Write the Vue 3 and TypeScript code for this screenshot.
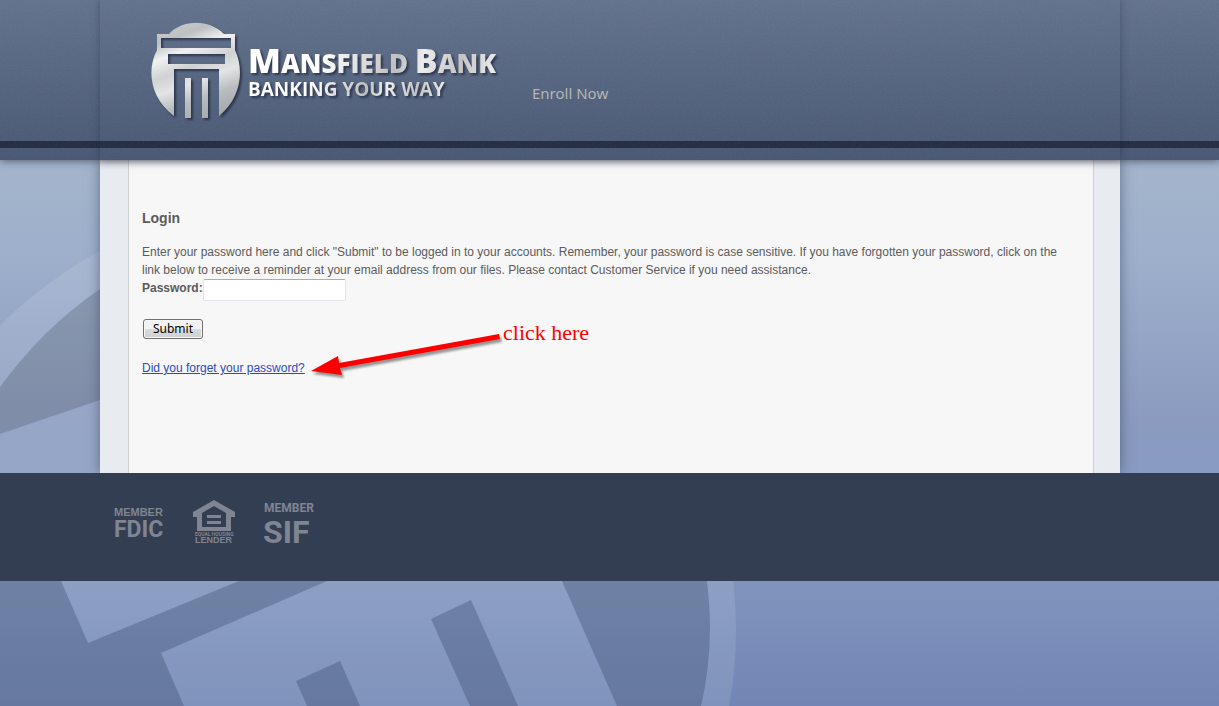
<script setup lang="ts">
import { ref } from 'vue'

const password = ref('')
</script>

<template>
  <div class="page">
    <svg class="backdrop" width="1219" height="706" viewBox="0 0 1219 706" aria-hidden="true">
      <circle cx="305" cy="630" r="431" fill="#ffffff" fill-opacity=".11" />
      <path d="M0 387Q43 328 100 289L400 160V320L100 400L0 434Z" fill="#3f495a" fill-opacity=".27" />
      <g fill="#2a3a5f" fill-opacity=".3">
        <path fill-rule="evenodd" d="M0 520H695Q710 580 710 627Q710 667 701 706H617L562 581L540 530H405L327 581L161 653L184 706H0ZM39 530L61 581L88 643L239 581L360 530Z" />
        <path d="M431 619L471 600L518 706H470Z" />
        <path d="M296 681L340 661L360 706H307Z" />
      </g>
    </svg>

    <header class="header">
      <svg class="grain" width="100%" height="100%" aria-hidden="true">
        <filter id="grain">
          <feTurbulence type="fractalNoise" baseFrequency=".6" numOctaves="2" />
          <feColorMatrix type="saturate" values="0" />
        </filter>
        <rect width="100%" height="100%" filter="url(#grain)" />
      </svg>
      <div class="masthead">
        <a class="brand" href="#" aria-label="Mansfield Bank, Banking Your Way">
          <svg class="emblem" width="90" height="100" viewBox="0 0 90 100" aria-hidden="true">
            <defs>
              <linearGradient id="steel" gradientUnits="userSpaceOnUse" x1="25" y1="0" x2="60" y2="96">
                <stop offset="0" stop-color="#c6c8ca" />
                <stop offset=".13" stop-color="#bdc0c2" />
                <stop offset=".28" stop-color="#f0f1f2" />
                <stop offset=".45" stop-color="#cfd1d3" />
                <stop offset=".6" stop-color="#e2e4e5" />
                <stop offset=".78" stop-color="#b9bcbf" />
                <stop offset="1" stop-color="#a4a8ac" />
              </linearGradient>
            </defs>
            <g fill="url(#steel)">
              <path fill-rule="evenodd" d="M5 11H17C31 -4 57 -4 72 11H83V27C92 46 90 74 67 93V46H22V93C-3 74 -5 46 5 27ZM9 15V25H79V15ZM16 31V41H73V31Z" />
              <path d="M33 55H39V95H33ZM50 55H56V95H50Z" />
            </g>
          </svg>
          <span class="wordmark">
            <span class="name"><span class="cap">M</span>ANSFIELD <span class="cap">B</span>ANK</span>
            <span class="tagline">BANKING YOUR WAY</span>
          </span>
        </a>
        <nav class="nav"><a href="#">Enroll Now</a></nav>
      </div>
    </header>

    <main class="shell">
      <section class="panel">
        <h1>Login</h1>
        <p>
          Enter your password here and click "Submit" to be logged in to your accounts. Remember, your password is case sensitive. If you have forgotten your password, click on the link below to receive a reminder at your email address from our files. Please contact Customer Service if you need assistance.
        </p>
        <form @submit.prevent>
          <div class="field">
            <label for="password">Password:</label>
            <input id="password" v-model="password" type="password" />
          </div>
          <button type="submit">Submit</button>
        </form>
        <div class="reminder">
          <a href="#">Did you forget your password?</a>
          <div class="callout">
            <svg width="196" height="52" viewBox="0 0 196 52" aria-hidden="true">
              <path d="M0 41L27 26L28 33L188 4L189 9L29 38L31 45Z" fill="#fe0000" />
            </svg>
            <span>click here</span>
          </div>
        </div>
      </section>
    </main>

    <footer class="footer">
      <svg width="50" height="30" viewBox="0 0 50 30" role="img" aria-label="Member FDIC">
        <text class="fdic-top" x="0" y="9">MEMBER</text>
        <text class="fdic" x="0" y="30">FDIC</text>
      </svg>
      <svg width="42" height="44" viewBox="0 0 42 44" role="img" aria-label="Equal Housing Lender">
        <path fill-rule="evenodd" d="M21 0L42 12V17H38V31H4V17H0V12ZM21 6L9 13V27H33V13Z" />
        <path d="M14 15H28V18H14ZM14 21H28V24H14Z" />
        <text class="equal" x="2" y="36">EQUAL HOUSING</text>
        <text class="lender" x="2" y="43">LENDER</text>
      </svg>
      <svg width="50" height="42" viewBox="0 0 50 42" role="img" aria-label="Member SIF">
        <text class="sif-top" x="0" y="11">MEMBER</text>
        <text class="sif" x="-1" y="42">SIF</text>
      </svg>
    </footer>
  </div>
</template>

<style>
html,
body {
  margin: 0;
  background: #7388b4;
}
</style>

<style scoped>
.page {
  position: relative;
  min-height: 100vh;
  overflow: hidden;
  font-family: "Liberation Sans", Arial, sans-serif;
  font-size: 12px;
  line-height: 18px;
  color: #5b5b5b;
  background: linear-gradient(#a4b5cb 160px, #9dafcb 260px, #8b9bc0 420px, #889bc0 475px, #8094bd 581px, #7186b4 706px);
}
.backdrop {
  position: absolute;
  top: 0;
  left: 0;
}
.header {
  position: relative;
  z-index: 1;
  height: 160px;
  background: linear-gradient(transparent 141px, #232b40 141px, #232b40 148px, transparent 148px), linear-gradient(#62718c, #475672);
  box-shadow: 0 1px 8px rgba(40, 45, 55, .65);
}
.grain {
  position: absolute;
  inset: 0;
  opacity: .07;
}
.masthead {
  position: relative;
  display: flex;
  box-sizing: border-box;
  height: 100%;
  margin: 0 99px 0 100px;
  padding: 23px 0 0 52px;
  box-shadow: 0 0 8px rgba(30, 38, 60, .4);
}
.brand {
  display: flex;
  align-items: flex-start;
  gap: 6px;
  width: 380px;
  color: #eee;
  text-decoration: none;
}
.emblem {
  flex: none;
  overflow: visible;
  filter: drop-shadow(2px 2px 1px rgba(25, 35, 55, .7));
}
.wordmark {
  display: flex;
  flex-direction: column;
  padding-top: 21px;
  white-space: nowrap;
  font-family: "Open Sans", "Noto Sans", sans-serif;
  font-weight: 800;
  filter: drop-shadow(2px 2px 1px rgba(25, 35, 55, .7));
}
.name,
.tagline {
  width: max-content;
  color: transparent;
  background: linear-gradient(100deg, #fff 30%, #bfbfbf 60%, #ededed 70%, #c4c4c4 85%, #eee);
  background-clip: text;
}
.name {
  font-size: 26px;
  line-height: 32px;
}
.cap {
  font-size: 34px;
}
.tagline {
  font-size: 19px;
  line-height: 20px;
  font-weight: 700;
}
.nav {
  padding-top: 58px;
}
.nav a {
  font-family: "Noto Sans", sans-serif;
  font-size: 15px;
  line-height: 24px;
  color: #b5b5b5;
  text-decoration: none;
}
.shell {
  position: relative;
  margin: 0 99px 0 100px;
  padding: 0 26px 0 28px;
  background: #e8ebf0;
  box-shadow: 0 0 12px rgba(50, 65, 95, .6);
}
.panel {
  box-sizing: border-box;
  min-height: 313px;
  padding: 49px 13px 0;
  border: solid #cfd0d2;
  border-width: 0 1px;
  background: #f7f7f7;
}
h1 {
  margin: 0 0 16px;
  font-size: 14px;
  line-height: 18px;
}
p {
  margin: 0;
  padding-right: 8px;
}
.field {
  display: flex;
  height: 22px;
  margin-bottom: 18px;
}
label {
  font-weight: 700;
}
input {
  box-sizing: border-box;
  width: 143px;
  height: 22px;
  padding: 2px;
  border: 1px solid #e2e3ea;
  border-top-color: #abadb3;
  border-radius: 2px;
  background: #fff;
}
button {
  display: block;
  width: 60px;
  height: 20px;
  margin-left: 1px;
  padding: 0;
  border: 1px solid #707070;
  border-radius: 3px;
  background: linear-gradient(#f2f2f2 50%, #dcdcdc 50%, #cfcfcf);
  box-shadow: inset 0 0 0 1px #f8f8f8;
  font-family: "Noto Sans", sans-serif;
  font-size: 12px;
  line-height: 18px;
  color: #000;
}
.reminder {
  position: relative;
  margin-top: 20px;
}
.reminder a {
  color: #2a4bc0;
}
.callout {
  position: absolute;
  top: -29px;
  left: 169px;
  display: flex;
  white-space: nowrap;
  font-family: "Liberation Serif", serif;
  font-size: 22px;
  line-height: 24px;
  color: #fe0000;
  pointer-events: none;
}
.callout svg {
  flex: none;
  margin-right: -4px;
  filter: drop-shadow(2px 3px 1px rgba(0, 0, 0, .4));
}
.callout span {
  margin-top: -9px;
}
.footer {
  position: relative;
  display: flex;
  align-items: center;
  gap: 29px;
  box-sizing: border-box;
  height: 108px;
  padding: 0 114px 10px;
  background: #343e52;
}
.footer svg {
  overflow: visible;
  fill: #7f8592;
  font-weight: 700;
}
.fdic-top {
  font-size: 11px;
}
.fdic {
  font-family: Roboto, sans-serif;
  font-size: 23px;
}
.equal {
  font-family: Roboto, sans-serif;
  font-size: 5px;
}
.lender {
  font-size: 9px;
}
.sif-top {
  font-family: Roboto, sans-serif;
  font-size: 12px;
}
.sif {
  font-family: Roboto, sans-serif;
  font-size: 32px;
}
</style>
